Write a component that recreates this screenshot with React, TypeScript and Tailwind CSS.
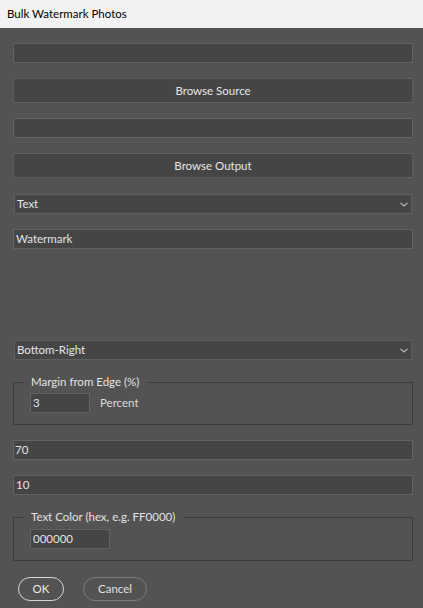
import type { ReactNode } from "react";

const font = { fontFamily: "Lato, 'Liberation Sans', sans-serif" };

function Field({ value = "", pad = "pl-[2px]" }: { value?: string; pad?: string }) {
  return (
    <div
      className={`flex h-5 items-center border border-[#626262] bg-[#454545] ${pad} text-[11.5px] text-[#e2e2e2]`}
    >
      {value}
    </div>
  );
}

function Button({ label, mt }: { label: string; mt: string }) {
  return (
    <div
      className={`${mt} flex h-[25px] items-center justify-center border border-[#5e5e5e] bg-[#454545] text-[11.5px] text-[#e6e6e6]`}
    >
      {label}
    </div>
  );
}

function Select({ value, mt }: { value: string; mt: string }) {
  return (
    <div
      className={`${mt} mx-px flex h-5 items-center justify-between border border-[#5e5e5e] bg-[#454545] pl-[2px] pr-[3px] text-[11.5px] text-[#e6e6e6]`}
    >
      <span>{value}</span>
      <svg width="8" height="5" viewBox="0 0 8 5" className="text-[#bdbdbd]">
        <polyline points="0.5,0.8 4,4 7.5,0.8" fill="none" stroke="currentColor" strokeWidth="1.1" />
      </svg>
    </div>
  );
}

function Group({ title, children, mt, pt }: { title: string; children: ReactNode; mt: string; pt: string }) {
  return (
    <fieldset className={`${mt} border border-[#3c3c3c] p-0`}>
      <legend className="ml-[9px] px-2 text-[11.5px] leading-4 text-[#e2e2e2]">{title}</legend>
      <div className={`pl-4 pb-[11px] ${pt}`}>{children}</div>
    </fieldset>
  );
}

export default function App() {
  return (
    <div className="flex h-[608px] w-[423px] flex-col bg-[#535353]" style={font}>
      <div className="flex h-7 shrink-0 items-center bg-[#f2f2f2] pl-[7px] text-[11.5px] text-black">
        Bulk Watermark Photos
      </div>
      <div className="flex flex-col pl-[13px] pr-[10px] pt-[15px]">
        <Field />
        <Button label="Browse Source" mt="mt-[15px]" />
        <div className="mt-[15px]">
          <Field />
        </div>
        <Button label="Browse Output" mt="mt-[15px]" />
        <Select value="Text" mt="mt-4" />
        <div className="mt-[15px]">
          <Field value="Watermark" />
        </div>
        <Select value="Bottom-Right" mt="mt-[91px]" />
        <Group title="Margin from Edge (%)" mt="mt-[14px]" pt="pt-[3px]">
          <div className="flex items-center gap-[10px]">
            <div className="w-[60px]">
              <Field value="3" />
            </div>
            <span className="text-[11.5px] text-[#dadada]">Percent</span>
          </div>
        </Group>
        <div className="mt-[15px]">
          <Field value="70" pad="pl-px" />
        </div>
        <div className="mt-[15px]">
          <Field value="10" />
        </div>
        <Group title="Text Color (hex, e.g. FF0000)" mt="mt-[14px]" pt="pt-1">
          <div className="w-20">
            <Field value="000000" />
          </div>
        </Group>
        <div className="mt-4 flex gap-[19px] pl-[5px]">
          <div className="flex h-6 w-[46px] items-center justify-center rounded-full border border-[#d6d6d6] text-[11.5px] text-[#ececec]">
            OK
          </div>
          <div className="flex h-6 w-16 items-center justify-center rounded-full border border-[#7c7c7c] text-[11.5px] text-[#e0e0e0]">
            Cancel
          </div>
        </div>
      </div>
    </div>
  );
}
